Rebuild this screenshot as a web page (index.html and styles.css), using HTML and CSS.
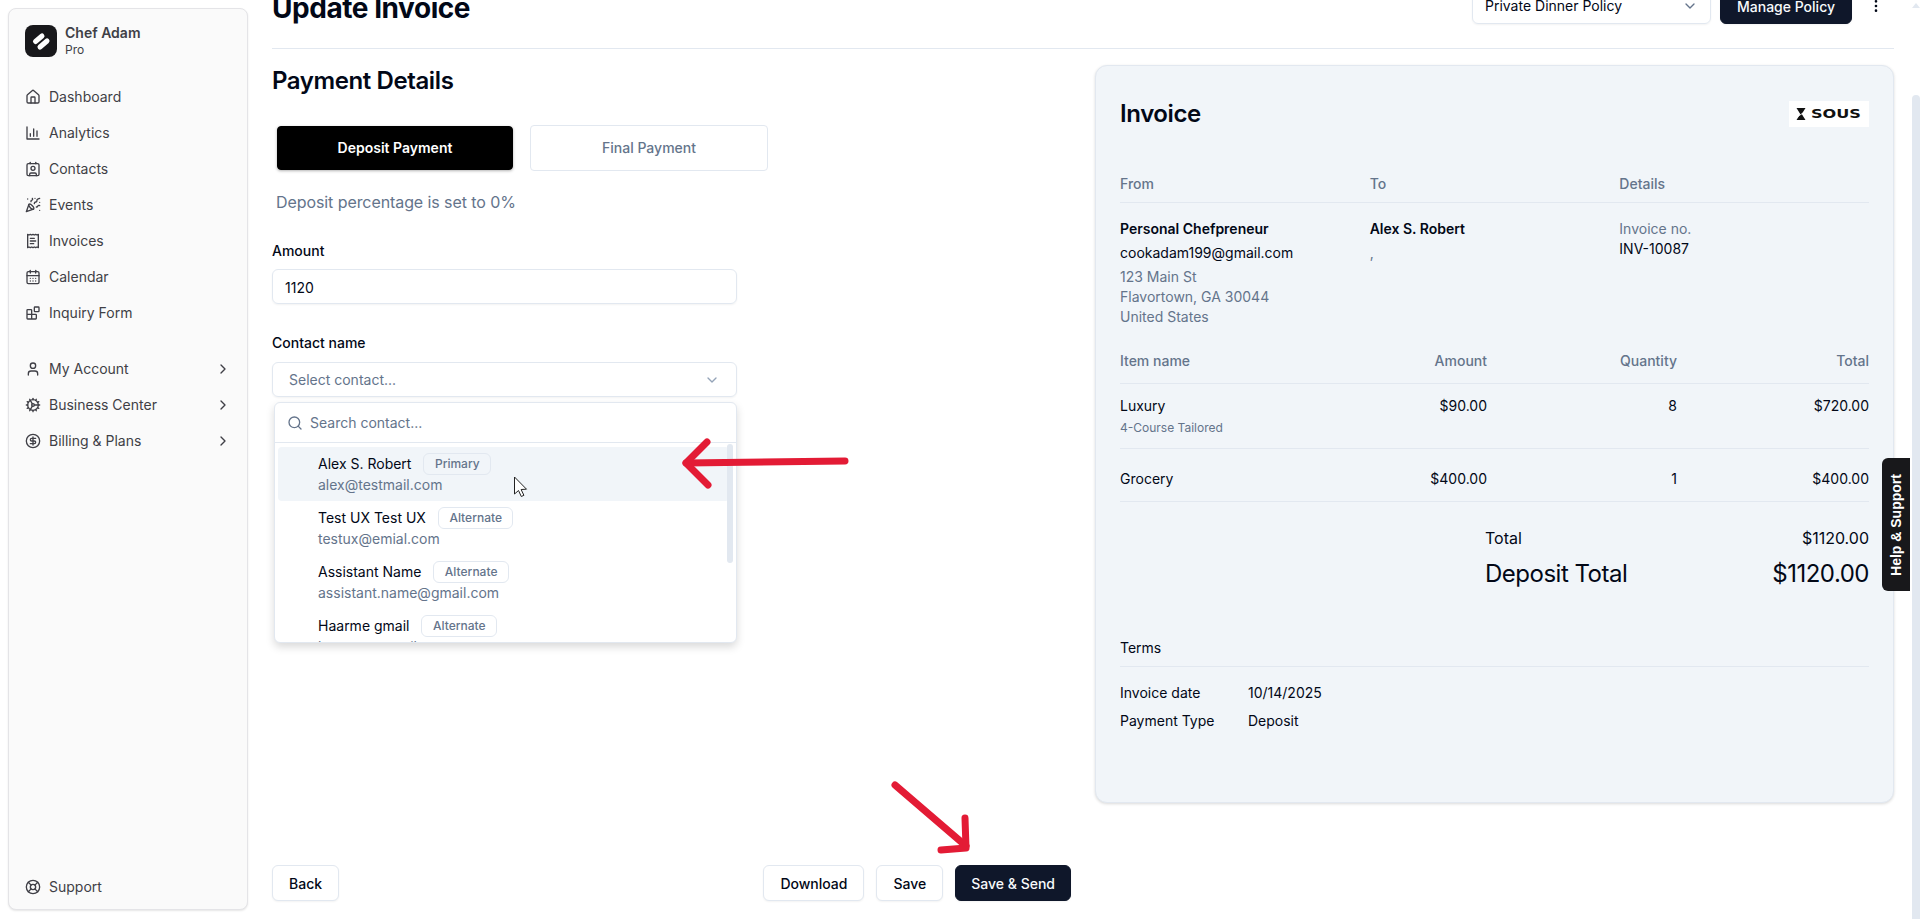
FILE: index.html
```html
<!DOCTYPE html>
<html lang="en">
<head>
    <meta charset="UTF-8">
    <meta name="viewport" content="width=device-width, initial-scale=1.0">
    <title>Update Invoice</title>
    <link rel="stylesheet" href="styles.css">
</head>
<body>
    <aside class="sidebar">
        <div class="brand">
            <svg class="brand-logo" viewBox="0 0 32 32"><rect width="32" height="32" rx="8" fill="#18181b"/><path d="M10.5 16.5 17 11M15 22 22 16" stroke="#fff" stroke-width="5" stroke-linecap="round"/></svg>
            <div>
                <div class="brand-name">Chef Adam</div>
                <div class="brand-plan">Pro</div>
            </div>
        </div>
        <nav class="nav">
            <a class="nav-item"><svg class="icon" viewBox="0 0 24 24"><path d="M15 21v-8a1 1 0 0 0-1-1h-4a1 1 0 0 0-1 1v8"/><path d="M3 10a2 2 0 0 1 .709-1.528l7-5.999a2 2 0 0 1 2.582 0l7 5.999A2 2 0 0 1 21 10v9a2 2 0 0 1-2 2H5a2 2 0 0 1-2-2z"/></svg>Dashboard</a>
            <a class="nav-item"><svg class="icon" viewBox="0 0 24 24"><path d="M3 3v18h18"/><path d="M8 17v-4"/><path d="M13 17V6"/><path d="M18 17v-8"/></svg>Analytics</a>
            <a class="nav-item"><svg class="icon" viewBox="0 0 24 24"><path d="M16 2v2"/><path d="M7 22v-2a2 2 0 0 1 2-2h6a2 2 0 0 1 2 2v2"/><path d="M8 2v2"/><circle cx="12" cy="11" r="3"/><rect x="3" y="4" width="18" height="18" rx="2"/></svg>Contacts</a>
            <a class="nav-item"><svg class="icon" viewBox="0 0 24 24"><path d="M5.8 11.3 2 22l10.7-3.79"/><path d="M4 3h.01"/><path d="M22 8h.01"/><path d="M15 2h.01"/><path d="M22 20h.01"/><path d="m22 2-2.24.75a2.9 2.9 0 0 0-1.96 3.12c.1.86-.57 1.63-1.45 1.63h-.38c-.86 0-1.6.6-1.76 1.44L14 10"/><path d="m22 13-.82-.33c-.86-.34-1.82.2-1.98 1.11c-.11.7-.72 1.22-1.43 1.22H17"/><path d="m11 2 .33.82c.34.86-.2 1.82-1.11 1.98C9.52 4.9 9 5.52 9 6.23V7"/><path d="M11 13c1.93 1.93 2.83 4.17 2 5-.83.83-3.07-.07-5-2-1.93-1.93-2.83-4.17-2-5 .83-.83 3.07.07 5 2Z"/></svg>Events</a>
            <a class="nav-item"><svg class="icon" viewBox="0 0 24 24"><path d="M4 2v20l2-1 2 1 2-1 2 1 2-1 2 1 2-1 2 1V2l-2 1-2-1-2 1-2-1-2 1-2-1-2 1Z"/><path d="M14 8H8"/><path d="M16 12H8"/><path d="M13 16H8"/></svg>Invoices</a>
            <a class="nav-item"><svg class="icon" viewBox="0 0 24 24"><path d="M8 2v4"/><path d="M16 2v4"/><rect x="3" y="4" width="18" height="18" rx="2"/><path d="M3 10h18"/><path d="M8 14h.01"/><path d="M12 14h.01"/><path d="M16 14h.01"/><path d="M8 18h.01"/><path d="M12 18h.01"/><path d="M16 18h.01"/></svg>Calendar</a>
            <a class="nav-item"><svg class="icon" viewBox="0 0 24 24"><rect width="7" height="7" x="14" y="3" rx="1"/><path d="M10 21V8a1 1 0 0 0-1-1H4a1 1 0 0 0-1 1v12a1 1 0 0 0 1 1h12a1 1 0 0 0 1-1v-5a1 1 0 0 0-1-1H3"/></svg>Inquiry Form</a>
        </nav>
        <nav class="nav nav-group">
            <a class="nav-item"><svg class="icon" viewBox="0 0 24 24"><path d="M19 21v-2a4 4 0 0 0-4-4H9a4 4 0 0 0-4 4v2"/><circle cx="12" cy="7" r="4"/></svg>My Account<svg class="icon chevron" viewBox="0 0 24 24"><path d="m9 18 6-6-6-6"/></svg></a>
            <a class="nav-item"><svg class="icon" viewBox="0 0 24 24"><path d="M12 20a8 8 0 1 0 0-16 8 8 0 0 0 0 16Z"/><path d="M12 14a2 2 0 1 0 0-4 2 2 0 0 0 0 4Z"/><path d="M12 2v2"/><path d="M12 22v-2"/><path d="m17 20.66-1-1.73"/><path d="M11 10.27 7 3.34"/><path d="m20.66 17-1.73-1"/><path d="m3.34 7 1.73 1"/><path d="M14 12h8"/><path d="M2 12h2"/><path d="m20.66 7-1.73 1"/><path d="m3.34 17 1.73-1"/><path d="m17 3.34-1 1.73"/><path d="m11 13.73-4 6.93"/></svg>Business Center<svg class="icon chevron" viewBox="0 0 24 24"><path d="m9 18 6-6-6-6"/></svg></a>
            <a class="nav-item"><svg class="icon" viewBox="0 0 24 24"><circle cx="12" cy="12" r="10"/><path d="M16 8h-6a2 2 0 1 0 0 4h4a2 2 0 1 1 0 4H8"/><path d="M12 18V6"/></svg>Billing &amp; Plans<svg class="icon chevron" viewBox="0 0 24 24"><path d="m9 18 6-6-6-6"/></svg></a>
        </nav>
        <a class="nav-item nav-support"><svg class="icon" viewBox="0 0 24 24"><circle cx="12" cy="12" r="10"/><path d="m4.93 4.93 4.24 4.24"/><path d="m14.83 9.17 4.24-4.24"/><path d="m14.83 14.83 4.24 4.24"/><path d="m9.17 14.83-4.24 4.24"/><circle cx="12" cy="12" r="4"/></svg>Support</a>
    </aside>

    <main class="main">
        <header class="topbar">
            <h1 class="page-title">Update Invoice</h1>
            <div class="topbar-actions">
                <div class="policy-select">Private Dinner Policy<svg class="icon" viewBox="0 0 24 24"><path d="m6 9 6 6 6-6"/></svg></div>
                <button class="btn btn-dark btn-policy">Manage Policy</button>
                <svg class="icon icon-more" viewBox="0 0 24 24"><circle cx="12" cy="12" r="1"/><circle cx="12" cy="5" r="1"/><circle cx="12" cy="19" r="1"/></svg>
            </div>
        </header>

        <div class="columns">
            <section class="payment">
                <h2 class="section-title">Payment Details</h2>
                <div class="tabs">
                    <div class="tab tab-active">Deposit Payment</div>
                    <div class="tab">Final Payment</div>
                </div>
                <p class="deposit-note">Deposit percentage is set to 0%</p>

                <label class="field-label field-amount">Amount</label>
                <div class="input input-amount">1120</div>

                <label class="field-label field-contact">Contact name</label>
                <div class="contact-field">
                    <div class="input input-select">Select contact...<svg class="icon" viewBox="0 0 24 24"><path d="m6 9 6 6 6-6"/></svg></div>
                    <div class="dropdown">
                        <div class="dropdown-search"><svg class="icon" viewBox="0 0 24 24"><circle cx="11" cy="11" r="8"/><path d="m21 21-4.3-4.3"/></svg>Search contact...</div>
                        <div class="dropdown-list">
                            <div class="contact contact-active">
                                <div class="contact-name">Alex S. Robert<span class="badge">Primary</span></div>
                                <div class="contact-email">alex@testmail.com</div>
                            </div>
                            <div class="contact">
                                <div class="contact-name">Test UX Test UX<span class="badge">Alternate</span></div>
                                <div class="contact-email">testux@emial.com</div>
                            </div>
                            <div class="contact">
                                <div class="contact-name">Assistant Name<span class="badge">Alternate</span></div>
                                <div class="contact-email">assistant.name@gmail.com</div>
                            </div>
                            <div class="contact">
                                <div class="contact-name">Haarme gmail<span class="badge">Alternate</span></div>
                                <div class="contact-email">haarme@gmail.com</div>
                            </div>
                        </div>
                        <div class="dropdown-scroll"></div>
                    </div>
                </div>

                <div class="form-actions">
                    <button class="btn">Back</button>
                    <div class="form-actions-right">
                        <button class="btn">Download</button>
                        <button class="btn">Save</button>
                        <button class="btn btn-dark btn-send">Save &amp; Send</button>
                    </div>
                </div>
            </section>

            <section class="invoice">
                <div class="invoice-head">
                    <h2 class="section-title">Invoice</h2>
                    <div class="sous-logo">
                        <svg class="sous-mark" viewBox="0 0 12 16"><path d="M0 0H12L7 8 12 16H0L5 8Z" fill="#111"/><path d="M1.5 11.5 11 5" stroke="#fff" stroke-width="1.2"/></svg>
                        <span class="sous-name">SOUS</span>
                    </div>
                </div>

                <div class="parties parties-head">
                    <div>From</div>
                    <div>To</div>
                    <div>Details</div>
                </div>
                <div class="parties parties-body">
                    <div>
                        <div class="strong">Personal Chefpreneur</div>
                        <div class="party-email">cookadam199@gmail.com</div>
                        <div class="address">123 Main St<br>Flavortown, GA 30044<br>United States</div>
                    </div>
                    <div>
                        <div class="strong">Alex S. Robert</div>
                        <div class="party-comma">,</div>
                    </div>
                    <div>
                        <div class="muted">Invoice no.</div>
                        <div>INV-10087</div>
                    </div>
                </div>

                <div class="items items-head">
                    <div>Item name</div>
                    <div class="num">Amount</div>
                    <div class="num">Quantity</div>
                    <div class="num">Total</div>
                </div>
                <div class="items items-row">
                    <div>Luxury<div class="item-note">4-Course Tailored</div></div>
                    <div class="num">$90.00</div>
                    <div class="num">8</div>
                    <div class="num">$720.00</div>
                </div>
                <div class="items items-row items-row-plain">
                    <div>Grocery</div>
                    <div class="num">$400.00</div>
                    <div class="num">1</div>
                    <div class="num">$400.00</div>
                </div>

                <div class="totals">
                    <div class="total-row"><span>Total</span><span>$1120.00</span></div>
                    <div class="total-row total-row-big"><span>Deposit Total</span><span>$1120.00</span></div>
                </div>

                <div class="terms-head">Terms</div>
                <div class="terms-row"><span class="terms-label">Invoice date</span><span>10/14/2025</span></div>
                <div class="terms-row"><span class="terms-label">Payment Type</span><span>Deposit</span></div>
            </section>
        </div>
    </main>

    <div class="help-tab"><span>Help &amp; Support</span></div>
    <div class="page-scroll"><div class="page-scroll-arrow"></div><div class="page-scroll-thumb"></div></div>

    <!-- annotations drawn over the screenshot -->
    <svg class="annotations" viewBox="0 0 1920 919">
        <g fill="none" stroke="#e31b35" stroke-width="7" stroke-linecap="round" stroke-linejoin="round">
            <path d="M845 461 686 463"/>
            <path d="M707 442 686 463 708 485"/>
            <path d="M895 785 966 846"/>
            <path d="M965 818 966 848 941 850"/>
        </g>
        <path d="M514.5 477V494l4-3.5 2.8 6 2.6-1.2-2.8-5.8 5.4-.3Z" fill="#fff" stroke="#222" stroke-width="1"/>
    </svg>
</body>
</html>
```

FILE: styles.css
```css
* {
    box-sizing: border-box;
}

html, body {
    height: 100%;
}

body {
    margin: 0;
    display: flex;
    overflow: hidden;
    background: #fff;
    color: #020817;
    font-family: "Inter", "Liberation Sans", sans-serif;
    font-size: 14px;
    line-height: 20px;
}

.icon {
    width: 16px;
    height: 16px;
    flex: none;
    fill: none;
    stroke: currentColor;
    stroke-width: 2;
    stroke-linecap: round;
    stroke-linejoin: round;
}

/* sidebar */
.sidebar {
    width: 240px;
    height: 902px;
    margin: 8px 0 0 8px;
    padding: 16px 16px 4px;
    flex: none;
    display: flex;
    flex-direction: column;
    background: #fafafa;
    border: 1px solid #e4e4e7;
    border-radius: 8px;
    box-shadow: 0 1px 2px rgba(0, 0, 0, 0.1);
    color: #3f3f46;
}

.brand {
    display: flex;
    align-items: center;
    gap: 8px;
    height: 32px;
}

.brand-logo {
    width: 32px;
    height: 32px;
    flex: none;
}

.brand-name {
    font-weight: 600;
    line-height: 18px;
}

.brand-plan {
    font-size: 12px;
    line-height: 16px;
}

.nav {
    margin-top: 22px;
}

.nav-group {
    margin-top: 20px;
}

.nav-item {
    display: flex;
    align-items: center;
    gap: 8px;
    height: 36px;
}

.chevron {
    margin-left: auto;
}

.nav-support {
    margin-top: auto;
}

/* main area, the page is scrolled a little so the title is cut off */
.main {
    flex: 1;
    min-width: 0;
    height: 919px;
    margin-left: 24px;
    padding: 0 26px 18px 0;
    display: flex;
    flex-direction: column;
}

.topbar {
    flex: none;
    height: 61px;
    margin-top: -12px;
    padding-top: 2px;
    display: flex;
    justify-content: space-between;
    align-items: flex-start;
    border-bottom: 1px solid #e2e8f0;
}

.page-title {
    margin: 0;
    font-size: 28px;
    line-height: 36px;
    font-weight: 700;
    letter-spacing: -0.45px;
}

.topbar-actions {
    display: flex;
    margin-top: -2px;
    margin-right: 10px;
}

.policy-select {
    width: 239px;
    height: 36px;
    padding: 0 12px;
    display: flex;
    align-items: center;
    justify-content: space-between;
    border: 1px solid #e2e8f0;
    border-radius: 6px;
    box-shadow: 0 1px 2px rgba(0, 0, 0, 0.05);
}

.policy-select .icon {
    color: #64748b;
}

.btn-policy {
    margin-left: 9px;
}

.icon-more {
    margin: 10px 0 0 16px;
}

.columns {
    flex: 1;
    min-height: 0;
    display: grid;
    grid-template-columns: 1fr 1fr;
    gap: 24px;
}

/* left column */
.payment {
    display: flex;
    flex-direction: column;
    padding-top: 16px;
}

.section-title {
    margin: 0;
    font-size: 24px;
    line-height: 32px;
    font-weight: 600;
    letter-spacing: -0.4px;
}

.tabs {
    display: flex;
    align-items: center;
    gap: 17px;
    margin: 28px 0 0 5px;
}

.tab {
    width: 238px;
    height: 46px;
    display: flex;
    align-items: center;
    justify-content: center;
    border: 1px solid #e2e8f0;
    border-radius: 4px;
    color: #64748b;
    font-weight: 500;
}

.tab-active {
    width: 236px;
    height: 44px;
    background: #000;
    border-color: #000;
    color: #fff;
    font-weight: 600;
    box-shadow: 0 1px 3px rgba(0, 0, 0, 0.3);
}

.deposit-note {
    margin: 19px 0 0 4px;
    font-size: 16px;
    line-height: 24px;
    letter-spacing: -0.08px;
    color: #64748b;
}

.field-label {
    display: block;
    font-weight: 500;
}

.field-amount {
    margin-top: 27px;
}

.field-contact {
    margin-top: 29px;
}

.input {
    width: 465px;
    height: 35px;
    margin-top: 8px;
    padding: 0 12px;
    display: flex;
    align-items: center;
    border: 1px solid #e2e8f0;
    border-radius: 6px;
    box-shadow: 0 1px 2px rgba(0, 0, 0, 0.05);
}

.input-amount {
    padding-top: 3px;
}

.input-select {
    justify-content: space-between;
    margin-top: 9px;
    padding: 0 16px;
    color: #64748b;
}

.input-select .icon {
    color: #94a3b8;
}

.contact-field {
    position: relative;
}

.dropdown {
    position: absolute;
    top: 49px;
    left: 2px;
    width: 463px;
    height: 241px;
    overflow: hidden;
    background: #fff;
    border: 1px solid #e2e8f0;
    border-radius: 6px;
    box-shadow: 0 4px 8px rgba(0, 0, 0, 0.15);
}

.dropdown-search {
    height: 40px;
    padding-left: 12px;
    display: flex;
    align-items: center;
    gap: 7px;
    border-bottom: 1px solid #e2e8f0;
    color: #64748b;
}

.dropdown-list {
    padding: 4px 7px 0 3px;
}

.contact {
    height: 54px;
    padding: 6px 0 0 40px;
    border-radius: 4px;
}

.contact-active {
    background: #f1f5f9;
}

.contact-name {
    display: flex;
    align-items: center;
    height: 22px;
}

.contact-email {
    color: #64748b;
}

.badge {
    margin-left: 12px;
    height: 22px;
    padding: 0 10.5px;
    display: flex;
    align-items: center;
    border: 1px solid #e2e8f0;
    border-radius: 6px;
    font-size: 12px;
    font-weight: 500;
    color: #64748b;
}

.dropdown-scroll {
    position: absolute;
    top: 41px;
    right: 3px;
    width: 6px;
    height: 119px;
    border-radius: 3px;
    background: #e2e8f0;
}

.form-actions {
    margin-top: auto;
    display: flex;
    justify-content: space-between;
}

.form-actions-right {
    display: flex;
    gap: 12px;
}

.btn {
    height: 36px;
    padding: 0 16px;
    background: #fff;
    border: 1px solid #e2e8f0;
    border-radius: 6px;
    box-shadow: 0 1px 2px rgba(0, 0, 0, 0.05);
    color: #020817;
    font-family: inherit;
    font-size: 14px;
    font-weight: 500;
}

.btn-dark {
    background: #0f172a;
    border-color: #0f172a;
    color: #f8fafc;
}

.btn-send {
    padding: 0 15px;
}

/* invoice card */
.invoice {
    align-self: start;
    height: 738px;
    margin-top: 16px;
    padding: 35px 24px 0;
    background: #f1f5f9;
    border: 1px solid #e2e8f0;
    border-radius: 12px;
    box-shadow: 0 1px 3px rgba(0, 0, 0, 0.15);
}

.invoice-head {
    display: flex;
    justify-content: space-between;
    align-items: center;
    height: 26px;
}

.sous-logo {
    width: 80px;
    height: 26px;
    padding-left: 7px;
    display: flex;
    align-items: center;
    gap: 5px;
    background: #fff;
}

.sous-mark {
    width: 10px;
    height: 12px;
    flex: none;
}

.sous-name {
    display: inline-block;
    font-family: "DejaVu Sans", sans-serif;
    font-size: 11.5px;
    font-weight: 700;
    color: #111;
    transform: scaleX(1.4);
    transform-origin: left center;
}

.parties {
    display: grid;
    grid-template-columns: repeat(3, 1fr);
}

.parties-head {
    margin-top: 47px;
    padding-bottom: 8px;
    border-bottom: 1px solid #e2e8f0;
    color: #64748b;
    font-weight: 500;
}

.parties-body {
    margin-top: 16px;
}

.strong {
    font-weight: 600;
}

.muted, .address {
    color: #64748b;
}

.party-email, .address, .party-comma {
    margin-top: 4px;
}

.party-comma {
    color: #64748b;
}

.items {
    display: grid;
    grid-template-columns: 200px 167px 190px 192px;
    border-bottom: 1px solid #e2e8f0;
}

.items-head {
    margin-top: 24px;
    padding-bottom: 12px;
    color: #64748b;
    font-weight: 500;
}

.items-row {
    padding: 12px 0;
}

.items-row-plain {
    padding-top: 20px;
}

.num {
    text-align: right;
}

.item-note {
    margin-top: 4px;
    font-size: 12px;
    line-height: 16px;
    color: #64748b;
}

.totals {
    margin: 24px 0 0 365px;
}

.total-row {
    display: flex;
    justify-content: space-between;
    font-size: 16px;
    line-height: 24px;
}

.total-row-big {
    margin-top: 8px;
    font-size: 24px;
    line-height: 32px;
    letter-spacing: -0.5px;
}

.terms-head {
    margin-top: 48px;
    padding-bottom: 8px;
    border-bottom: 1px solid #e2e8f0;
}

.terms-row {
    display: flex;
    margin-top: 8px;
}

.terms-head + .terms-row {
    margin-top: 16px;
}

.terms-label {
    width: 128px;
}

/* floating bits */
.help-tab {
    position: absolute;
    top: 458px;
    left: 1882px;
    width: 28px;
    height: 133px;
    display: flex;
    align-items: center;
    justify-content: center;
    background: #18181b;
    border-radius: 6px 0 0 6px;
    color: #fff;
    font-family: "Liberation Sans", sans-serif;
    font-weight: 700;
    white-space: nowrap;
}

.help-tab span {
    transform: rotate(-90deg);
}

.page-scroll {
    position: absolute;
    top: 0;
    right: 0;
    width: 8px;
    height: 919px;
    background: #fff;
}

.page-scroll-arrow {
    position: absolute;
    top: 3px;
    left: 0;
    border: 4px solid transparent;
    border-top: 0;
    border-bottom: 5px solid #e2e8f0;
}

.page-scroll-thumb {
    margin-top: 95px;
    height: 824px;
    background: #e2e8f0;
    border-radius: 4px 4px 0 0;
}

.annotations {
    position: absolute;
    top: 0;
    left: 0;
    width: 1920px;
    height: 919px;
    pointer-events: none;
}
```
